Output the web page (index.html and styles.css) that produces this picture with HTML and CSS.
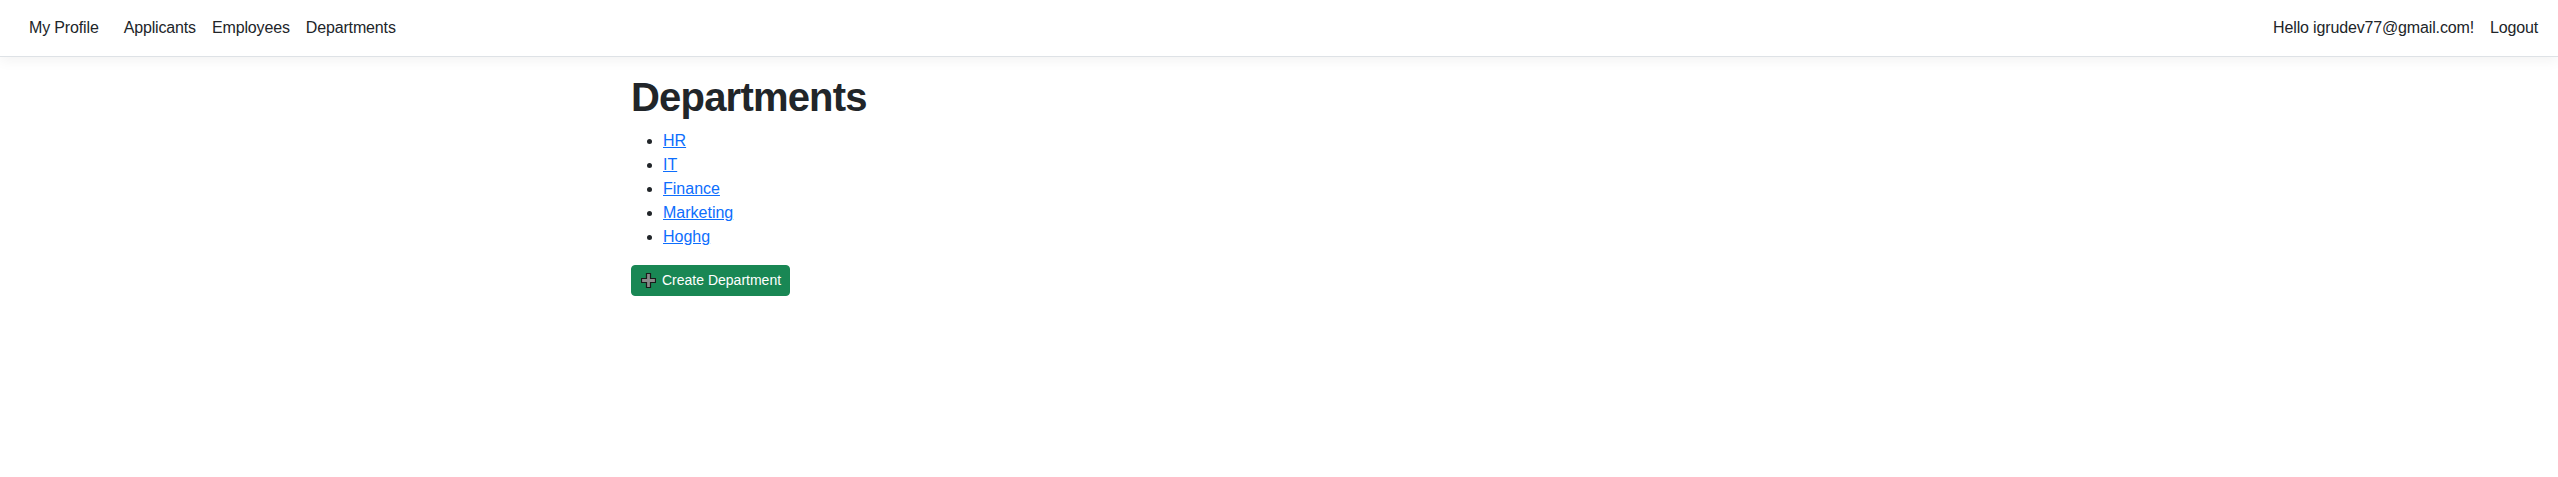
FILE: index.html
```html
<!DOCTYPE html>
<html lang="en">
<head>
<meta charset="utf-8">
<title>Departments</title>
<link rel="stylesheet" href="styles.css">
</head>
<body>
<header class="navbar">
  <nav class="nav-left">
    <a class="nav-link brand" href="#">My Profile</a>
    <a class="nav-link" href="#">Applicants</a>
    <a class="nav-link" href="#">Employees</a>
    <a class="nav-link" href="#">Departments</a>
  </nav>
  <nav class="nav-right">
    <a class="nav-link" href="#">Hello igrudev77@gmail.com!</a>
    <a class="nav-link" href="#">Logout</a>
  </nav>
</header>
<main class="container">
  <h1 class="title">Departments</h1>
  <ul class="dept-list">
    <li><a href="#">HR</a></li>
    <li><a href="#">IT</a></li>
    <li><a href="#">Finance</a></li>
    <li><a href="#">Marketing</a></li>
    <li><a href="#">Hoghg</a></li>
  </ul>
  <a class="btn-create" href="#">
    <svg class="plus" width="15" height="15" viewBox="0 0 15 15" aria-hidden="true">
      <path d="M5.5 0.5h4v5h5v4h-5v5h-4v-5h-5v-4h5z" fill="#8a8a8a" stroke="#1a1a1a" stroke-width="1.2" stroke-linejoin="miter"/>
    </svg>
    <span>Create Department</span>
  </a>
</main>
</body>
</html>
```
FILE: styles.css
```css
* { box-sizing: border-box; }
html, body { margin: 0; padding: 0; }
body {
  font-family: "Liberation Sans", Arial, sans-serif;
  font-size: 16px;
  line-height: 1.5;
  color: #212529;
  background: #fff;
}
.navbar {
  display: flex;
  justify-content: space-between;
  align-items: center;
  padding: 8px 12px;
  border-bottom: 1px solid #dee2e6;
  box-shadow: 0 .25rem .75rem rgba(0,0,0,.05);
  margin-bottom: 16px;
}
.nav-left, .nav-right { display: flex; }
.nav-link {
  display: block;
  padding: 8px;
  color: #212529;
  text-decoration: none;
  letter-spacing: -0.15px;
}
.brand { margin-left: 9px; margin-right: 9px; }
.container {
  max-width: 1320px;
  margin: 0 auto;
  padding: 0 12px;
}
.title {
  margin: 0 0 8px;
  font-size: 40px;
  font-weight: 700;
  line-height: 1.2;
  letter-spacing: -0.8px;
}
.dept-list {
  margin: 0 0 16px;
  padding-left: 32px;
}
.dept-list a { color: #0d6efd; text-decoration: underline; }
.btn-create {
  display: inline-flex;
  align-items: center;
  gap: 6px;
  padding: 4px 8px 4px 9px;
  font-size: 14px;
  line-height: 21px;
  color: #fff;
  background: #198754;
  border: 1px solid #198754;
  border-radius: 4px;
  text-decoration: none;
}
.plus { display: block; }
```
